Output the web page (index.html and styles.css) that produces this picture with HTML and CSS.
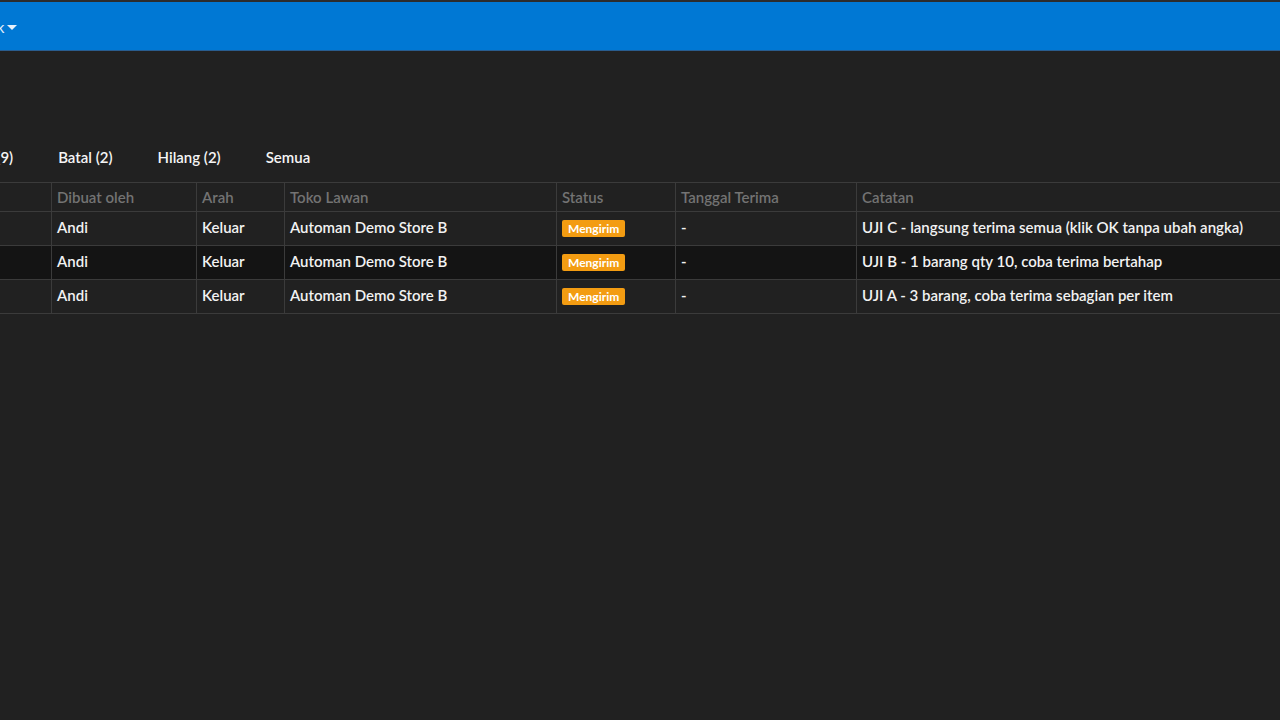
FILE: index.html
```html
<!DOCTYPE html>
<html lang="en">
<head>
    <meta charset="UTF-8">
    <meta name="viewport" content="width=device-width, initial-scale=1.0">
    <title>Transfer Stok</title>
    <link rel="stylesheet" href="styles.css">
</head>
<body>
    <div class="topbar">
        <div class="nav-item">Stok <span class="caret"></span></div>
    </div>

    <div class="page">
        <div class="tabs">
            <div class="tab">Diterima (9)</div>
            <div class="tab">Batal (2)</div>
            <div class="tab">Hilang (2)</div>
            <div class="tab">Semua</div>
        </div>

        <table class="grid">
            <colgroup>
                <col class="c-no">
                <col class="c-by">
                <col class="c-dir">
                <col class="c-store">
                <col class="c-status">
                <col class="c-date">
                <col class="c-note">
            </colgroup>
            <thead>
                <tr>
                    <th>Tanggal</th>
                    <th>Dibuat oleh</th>
                    <th>Arah</th>
                    <th>Toko Lawan</th>
                    <th>Status</th>
                    <th>Tanggal Terima</th>
                    <th>Catatan</th>
                </tr>
            </thead>
            <tbody>
                <tr>
                    <td>12/05</td>
                    <td>Andi</td>
                    <td>Keluar</td>
                    <td>Automan Demo Store B</td>
                    <td><span class="badge">Mengirim</span></td>
                    <td>-</td>
                    <td>UJI C - langsung terima semua (klik OK tanpa ubah angka)</td>
                </tr>
                <tr class="hover">
                    <td>12/05</td>
                    <td>Andi</td>
                    <td>Keluar</td>
                    <td>Automan Demo Store B</td>
                    <td><span class="badge">Mengirim</span></td>
                    <td>-</td>
                    <td>UJI B - 1 barang qty 10, coba terima bertahap</td>
                </tr>
                <tr>
                    <td>12/05</td>
                    <td>Andi</td>
                    <td>Keluar</td>
                    <td>Automan Demo Store B</td>
                    <td><span class="badge">Mengirim</span></td>
                    <td>-</td>
                    <td>UJI A - 3 barang, coba terima sebagian per item</td>
                </tr>
            </tbody>
        </table>
    </div>
</body>
</html>
```

FILE: styles.css
```css
body {
    margin: 0;
    font-family: Lato, "Open Sans", sans-serif;
    background-color: #212121;
    color: #f2f2f2;
    overflow: hidden;
}
.topbar {
    height: 48px;
    border-top: 2px solid #2c2c2c;
    border-bottom: 1px solid #2a5d8e;
    background-color: #0078d4;
    display: flex;
    align-items: center;
}
.nav-item {
    margin-left: -25px;
    margin-top: 2px;
    font-size: 15px;
    color: #e8f1fb;
    display: flex;
    align-items: center;
    gap: 3px;
}
.caret {
    width: 0;
    height: 0;
    border-left: 5px solid transparent;
    border-right: 5px solid transparent;
    border-top: 5px solid #e8f1fb;
}
.page {
    padding-top: 94px;
    overflow: hidden;
}
.tabs {
    display: flex;
    gap: 45px;
    margin-left: -65px;
    height: 37px;
    font-size: 15px;
    font-weight: 600;
}
.tab {
    padding-top: 3px;
    color: #f5f5f5;
}
.grid {
    border-collapse: collapse;
    table-layout: fixed;
    margin-left: -70px;
    width: 1426px;
    font-size: 15px;
}
.c-no { width: 121px; }
.c-by { width: 145px; }
.c-dir { width: 88px; }
.c-store { width: 272px; }
.c-status { width: 119px; }
.c-date { width: 181px; }
.c-note { width: 500px; }
.grid th,
.grid td {
    border: 1px solid #3b3b3b;
    padding: 0 5px;
    text-align: left;
    white-space: nowrap;
    overflow: hidden;
}
.grid th {
    height: 28px;
    font-weight: 600;
    color: #737373;
}
.grid td {
    height: 34px;
    box-sizing: border-box;
    font-weight: 600;
    vertical-align: top;
    padding-top: 6px;
}
.grid tr.hover td {
    background-color: #141414;
}
.badge {
    display: inline-block;
    background-color: #f39c12;
    color: #fff;
    font-size: 12px;
    font-weight: 700;
    line-height: 13px;
    padding: 2px 6px;
    border-radius: 2px;
    margin-top: 1px;
}
```
